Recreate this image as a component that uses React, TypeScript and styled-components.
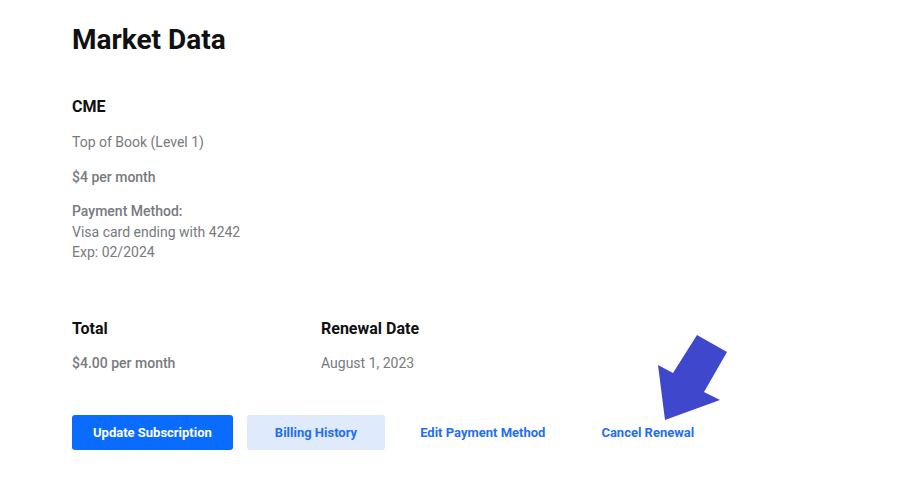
import React from 'react'
import styled, { createGlobalStyle } from 'styled-components'

const GlobalStyle = createGlobalStyle`
  body {
    margin: 0;
    background: #ffffff;
    font-family: Roboto, 'Liberation Sans', sans-serif;
  }
`

const Page = styled.div`
  position: relative;
  width: 908px;
  height: 488px;
  padding: 23px 72px 0;
  box-sizing: border-box;
`

const Title = styled.h1`
  margin: 0;
  font-size: 28px;
  line-height: 34px;
  font-weight: 700;
  color: #111111;
`

const Section = styled.section`
  margin-top: 40px;
`

const Heading = styled.h3`
  margin: 0;
  font-size: 16px;
  line-height: 20px;
  font-weight: 700;
  color: #111111;
`

const Text = styled.p<{ $bold?: boolean; $gap?: number }>`
  margin: ${(p) => p.$gap ?? 15}px 0 0;
  font-size: 14px;
  line-height: 20.5px;
  font-weight: ${(p) => (p.$bold ? 500 : 400)};
  color: #777a80;
`

const Summary = styled.div`
  display: grid;
  grid-template-columns: 249px 249px;
  margin-top: 56px;
`

const Actions = styled.div`
  display: flex;
  align-items: center;
  gap: 14px;
  margin-top: 42px;
`

const Button = styled.button<{ $variant: 'primary' | 'soft' | 'link'; $pad: number }>`
  height: 35px;
  padding: 0 ${(p) => p.$pad}px;
  border: none;
  border-radius: 3px;
  font-family: inherit;
  font-size: 13px;
  font-weight: 700;
  cursor: pointer;
  background: ${(p) =>
    p.$variant === 'primary' ? '#0a6cff' : p.$variant === 'soft' ? '#dfeafd' : 'transparent'};
  color: ${(p) => (p.$variant === 'primary' ? '#ffffff' : '#1f6ff0')};
`

const Arrow = styled.svg`
  position: absolute;
  left: 0;
  top: 0;
  pointer-events: none;
`

export default function App() {
  return (
    <>
      <GlobalStyle />
      <Page>
        <Title>Market Data</Title>
        <Section>
          <Heading>CME</Heading>
          <Text>Top of Book (Level 1)</Text>
          <Text $bold $gap={14}>$4 per month</Text>
          <Text $bold $gap={14}>Payment Method:</Text>
          <Text $gap={0}>Visa card ending with 4242</Text>
          <Text $gap={0}>Exp: 02/2024</Text>
        </Section>
        <Summary>
          <div>
            <Heading>Total</Heading>
            <Text $bold $gap={14}>$4.00 per month</Text>
          </div>
          <div>
            <Heading>Renewal Date</Heading>
            <Text $gap={14}>August 1, 2023</Text>
          </div>
        </Summary>
        <Actions>
          <Button $variant="primary" $pad={21}>Update Subscription</Button>
          <Button $variant="soft" $pad={28}>Billing History</Button>
          <Button $variant="link" $pad={21}>Edit Payment Method</Button>
          <Button $variant="link" $pad={21}>Cancel Renewal</Button>
        </Actions>
        <Arrow width="908" height="488" viewBox="0 0 908 488">
          <polygon
            points="697,335 727,352 704,392 720,400 665,420 658,365 673,373"
            fill="#3f48cc"
          />
        </Arrow>
      </Page>
    </>
  )
}
